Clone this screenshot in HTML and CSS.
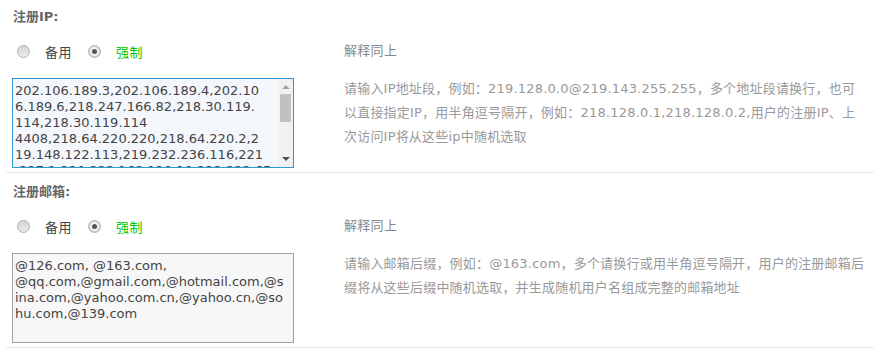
FILE: index.html
```html
<!DOCTYPE html>
<html lang="zh-CN">
<head>
<meta charset="utf-8">
<title>注册设置</title>
<link rel="stylesheet" href="styles.css">
</head>
<body>
<div class="section first">
  <div class="title">注册IP:</div>
  <div class="row radio-row">
    <div class="cell-left">
      <label class="opt"><span class="radio"></span><span class="opt-text">备用</span></label>
      <label class="opt"><span class="radio checked"></span><span class="opt-text on">强制</span></label>
    </div>
    <div class="cell-right note">解释同上</div>
  </div>
  <div class="row field-row">
    <div class="cell-left">
      <div class="box box-focus">
        <textarea class="ta" spellcheck="false">202.106.189.3,202.106.189.4,202.10
6.189.6,218.247.166.82,218.30.119.
114,218.30.119.114
4408,218.64.220.220,218.64.220.2,2
19.148.122.113,219.232.236.116,221
.227.1.220,222.168.120.10,222.222.65</textarea>
        <div class="sbar">
          <span class="arrow up"></span>
          <div class="track"><span class="thumb"></span></div>
          <span class="arrow down"></span>
        </div>
      </div>
    </div>
    <div class="cell-right help">请输入IP地址段，例如：219.128.0.0@219.143.255.255，多个地址段请换行，也可<br>以直接指定IP，用半角逗号隔开，例如：218.128.0.1,218.128.0.2,用户的注册IP、上<br>次访问IP将从这些ip中随机选取</div>
  </div>
</div>
<div class="section">
  <div class="title">注册邮箱:</div>
  <div class="row radio-row">
    <div class="cell-left">
      <label class="opt"><span class="radio"></span><span class="opt-text">备用</span></label>
      <label class="opt"><span class="radio checked"></span><span class="opt-text on">强制</span></label>
    </div>
    <div class="cell-right note">解释同上</div>
  </div>
  <div class="row field-row">
    <div class="cell-left">
      <div class="box box-plain">
        <textarea class="ta" spellcheck="false">@126.com, @163.com,
@qq.com,@gmail.com,@hotmail.com,@s
ina.com,@yahoo.com.cn,@yahoo.cn,@so
hu.com,@139.com</textarea>
      </div>
    </div>
    <div class="cell-right help">请输入邮箱后缀，例如：@163.com，多个请换行或用半角逗号隔开，用户的注册邮箱后<br>缀将从这些后缀中随机选取，并生成随机用户名组成完整的邮箱地址</div>
  </div>
</div>
</body>
</html>
```
FILE: styles.css
```css
html, body {
  margin: 0;
  padding: 0;
  background: #ffffff;
}
body {
  font-family: "DejaVu Sans", "Noto Sans CJK SC", sans-serif;
  font-size: 13px;
  color: #333;
  width: 891px;
  height: 354px;
  overflow: hidden;
}
.section {
  margin: 0 17px 0 6px;
  padding: 9px 0 4px;
  border-bottom: 1px solid #e3ebf3;
}
.section.first {
  padding-top: 7px;
}
.title {
  padding-left: 7px;
  line-height: 20px;
  height: 20px;
  font-weight: bold;
  color: #666;
  font-size: 13px;
}
.row {
  display: grid;
  grid-template-columns: 338px 1fr;
}
.radio-row {
  margin-top: 12px;
  height: 24px;
  align-items: center;
}
.radio-row .cell-left {
  display: flex;
  align-items: center;
  padding-left: 11px;
}
.opt {
  display: flex;
  align-items: center;
}
.opt + .opt {
  margin-left: 16px;
}
.radio {
  position: relative;
  width: 11px;
  height: 11px;
  border-radius: 50%;
  border: 1px solid #b0b0b0;
  background: linear-gradient(#d4d4d4, #ececec);
}
.radio.checked {
  background: #f2f2f2;
  box-shadow: inset 0 0 0 1px #d0d0d0;
}
.radio.checked::after {
  content: "";
  position: absolute;
  left: 3px;
  top: 3px;
  width: 5px;
  height: 5px;
  border-radius: 50%;
  background: #555;
}
.opt-text {
  margin-left: 15px;
  color: #444;
  letter-spacing: 0.5px;
}
.opt-text.on {
  color: #00c800;
}
.note {
  color: #888;
  line-height: 24px;
  letter-spacing: 0.3px;
}
.field-row {
  margin-top: 15px;
}
.field-row .cell-left {
  padding-left: 6px;
}
.box {
  width: 280px;
  height: 88px;
  display: flex;
}
.box-focus {
  border: 1px solid #2b9ad0;
  background: #f4f7fc;
}
.box-plain {
  border: 1px solid #a0a0a0;
  background: #f7f7f7;
}
.ta {
  flex: 1;
  min-width: 0;
  margin: 0;
  border: 0;
  outline: none;
  resize: none;
  overflow: hidden;
  background: transparent;
  white-space: pre;
  padding: 4px 2px;
  font-family: "DejaVu Sans", sans-serif;
  font-size: 13px;
  line-height: 16px;
  color: #444;
}
.sbar {
  width: 15px;
  background: #f1f1f1;
  display: flex;
  flex-direction: column;
  align-items: center;
}
.arrow {
  width: 0;
  height: 0;
  border-left: 4px solid transparent;
  border-right: 4px solid transparent;
}
.arrow.up {
  margin-top: 6px;
  border-bottom: 4px solid #a3a3a3;
}
.arrow.down {
  margin-bottom: 6px;
  border-top: 4px solid #505050;
}
.track {
  flex: 1;
  width: 100%;
  padding: 5px 1px 0;
  box-sizing: border-box;
}
.thumb {
  display: block;
  height: 28px;
  background: #c1c1c1;
  margin: 0 1px;
}
.help {
  color: #999;
  line-height: 24px;
  margin-top: -1px;
  white-space: nowrap;
  letter-spacing: 0.2px;
}
```
